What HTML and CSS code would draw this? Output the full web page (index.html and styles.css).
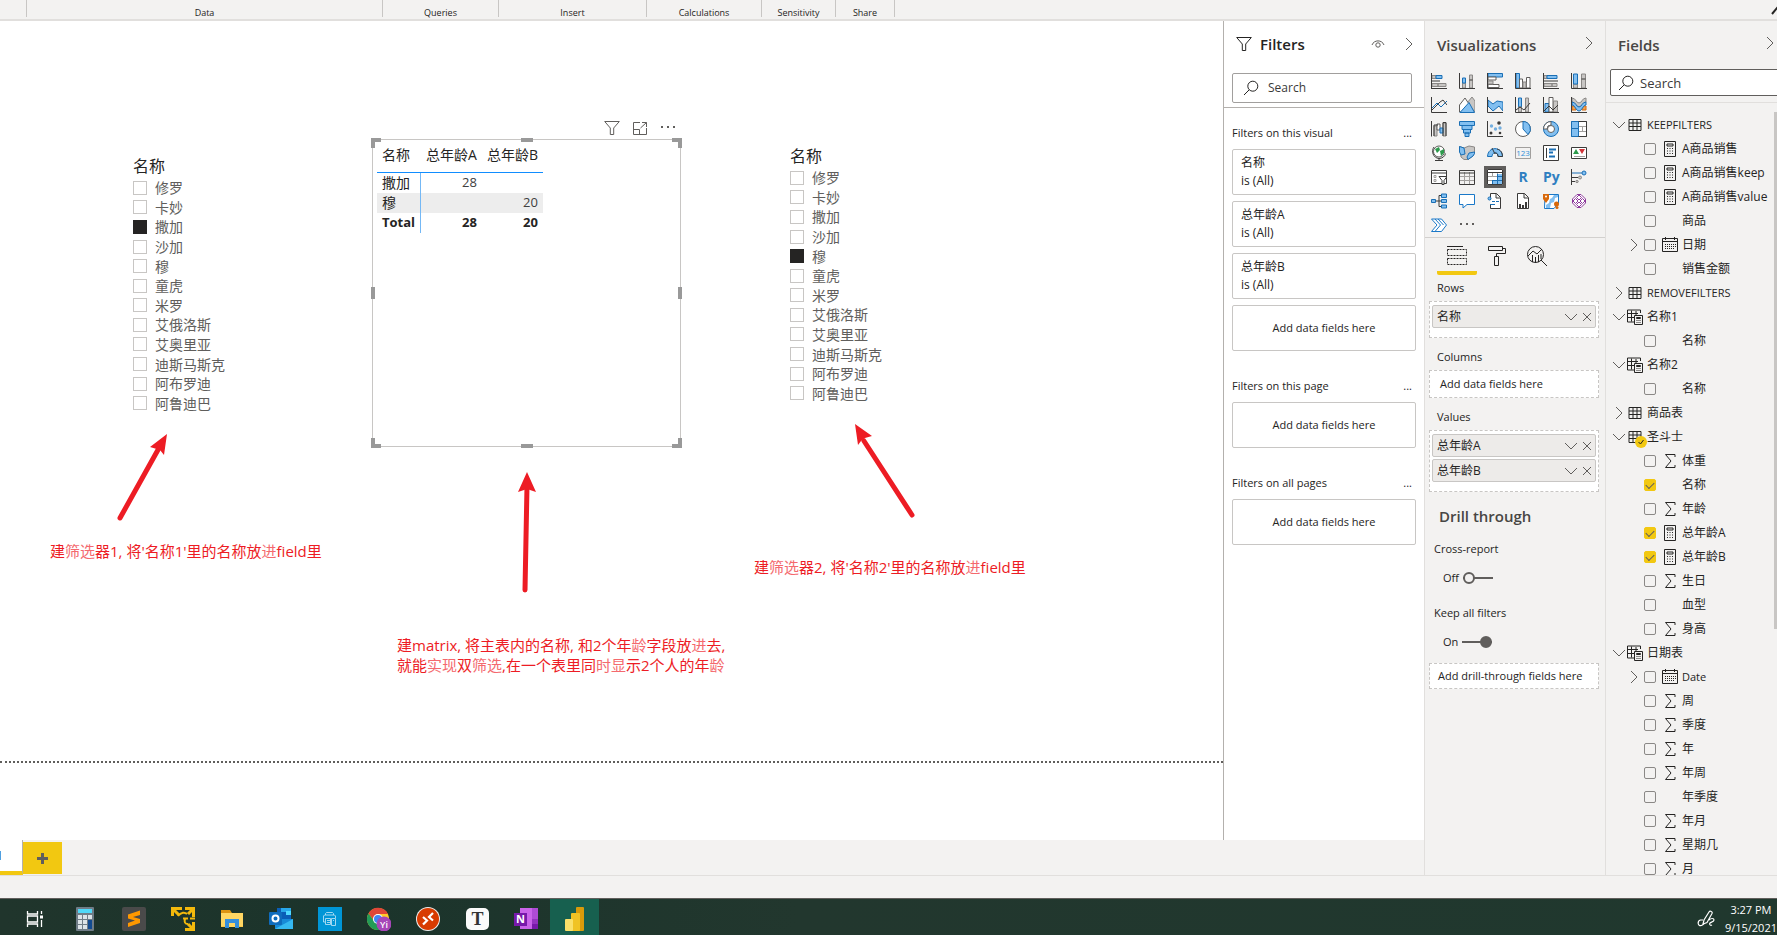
FILE: index.html
```html
<!DOCTYPE html>
<html lang="zh-CN">
<head>
<meta charset="utf-8">
<title>Report</title>
<link rel="stylesheet" href="styles.css">
</head>
<body>
<svg class="defs" aria-hidden="true">
  <symbol id="funnel" viewBox="0 0 16 16"><path d="M.7 1.5h14.6L9.7 8v6.5H6.3V8z"/></symbol>
  <symbol id="lens" viewBox="0 0 16 16"><circle cx="9.8" cy="6.2" r="5"/><path d="M6.2 9.8 1 15"/></symbol>
  <symbol id="right" viewBox="0 0 12 12"><path d="m3 0 6 6-6 6"/></symbol>
  <symbol id="down" viewBox="0 0 12 12"><path d="m0 3 6 6 6-6"/></symbol>
  <symbol id="cross" viewBox="0 0 12 12"><path d="m2 2 8 8M10 2l-8 8"/></symbol>
  <symbol id="table" viewBox="0 0 16 16"><path d="M2 2.5h12v11H2zM2 6h12M2 9.5h12M6 2.5v11M10 2.5v11"/></symbol>
  <symbol id="calctable" viewBox="0 0 16 16"><path d="M7 13H.5V1h13v3M.5 4.5H11M.5 8.500H7M4.500 1.500v11M9 2v4M7.500 6.500h8v9h-8zM9.500 8.500h4v1h-4zM9.500 11.500h1m1 0h1m1 0h.5M9.500 13.500h1m1 0h1m1 0h.5"/></symbol>
  <symbol id="calc" viewBox="0 0 16 16"><path d="M2.500.5h11v15h-11zM5 3h6v2H5z"/><path d="M5 7.500h7M5 10h7M5 12.500h7" stroke-dasharray="1 1.500"/></symbol>
  <symbol id="cal" viewBox="0 0 16 16"><path d="M.5 1.500h15v13H.5zM.5 4.500h15M3.500 0v3M12.500 0v3"/><path d="M3 7.500h11M3 9.500h11M3 11.500h9" stroke-dasharray="1 1"/></symbol>
  <symbol id="sum" viewBox="0 0 16 16"><path d="M13 4V1.500H3.500L9 8l-5.500 6.500H13V12"/></symbol>
</svg>

<header class="ribbon">
  <div class="group g0"></div>
  <div class="group g1">Data</div>
  <div class="group g2">Queries</div>
  <div class="group g3">Insert</div>
  <div class="group g4">Calculations</div>
  <div class="group g5">Sensitivity</div>
  <div class="group g6">Share</div>
  <button class="collapse" aria-label="Collapse ribbon"><svg viewBox="0 0 12 12"><path d="m1 9 5-6 5 6"/></svg></button>
</header>

<div class="workspace">
  <div class="report">
    <div class="stage">
      <main class="canvas">
        <fieldset class="slicer slicer-a">
          <legend>名称</legend>
          <div class="options">
            <label><input type="checkbox">修罗</label>
            <label><input type="checkbox">卡妙</label>
            <label><input type="checkbox" checked>撒加</label>
            <label><input type="checkbox">沙加</label>
            <label><input type="checkbox">穆</label>
            <label><input type="checkbox">童虎</label>
            <label><input type="checkbox">米罗</label>
            <label><input type="checkbox">艾俄洛斯</label>
            <label><input type="checkbox">艾奥里亚</label>
            <label><input type="checkbox">迪斯马斯克</label>
            <label><input type="checkbox">阿布罗迪</label>
            <label><input type="checkbox">阿鲁迪巴</label>
          </div>
        </fieldset>

        <section class="matrix" aria-label="Matrix">
          <div class="tools">
            <button aria-label="Filters"><svg class="line" viewBox="0 0 16 16"><use href="#funnel"/></svg></button>
            <button aria-label="Focus mode"><svg class="line" viewBox="0 0 16 16"><path d="M8 2.500H1.500v12h13V8M10 2.500h4.500V7M14.500 2.500 8.500 8M1.500 9.500h6v5"/></svg></button>
            <button aria-label="More options"><svg class="solid" viewBox="0 0 16 16"><path d="M1 6h2v2H1zM7 6h2v2H7zM13 6h2v2h-2z"/></svg></button>
          </div>
          <table>
            <thead><tr><th>名称</th><th>总年龄A</th><th>总年龄B</th></tr></thead>
            <tbody>
              <tr><th>撒加</th><td>28</td><td></td></tr>
              <tr class="alt"><th>穆</th><td></td><td>20</td></tr>
              <tr class="total"><th>Total</th><td>28</td><td>20</td></tr>
            </tbody>
          </table>
          <i class="corner tl"></i><i class="corner tr"></i><i class="corner bl"></i><i class="corner br"></i>
          <i class="edge top"></i><i class="edge bottom"></i><i class="edge left"></i><i class="edge right"></i>
        </section>

        <fieldset class="slicer slicer-b">
          <legend>名称</legend>
          <div class="options">
            <label><input type="checkbox">修罗</label>
            <label><input type="checkbox">卡妙</label>
            <label><input type="checkbox">撒加</label>
            <label><input type="checkbox">沙加</label>
            <label><input type="checkbox" checked>穆</label>
            <label><input type="checkbox">童虎</label>
            <label><input type="checkbox">米罗</label>
            <label><input type="checkbox">艾俄洛斯</label>
            <label><input type="checkbox">艾奥里亚</label>
            <label><input type="checkbox">迪斯马斯克</label>
            <label><input type="checkbox">阿布罗迪</label>
            <label><input type="checkbox">阿鲁迪巴</label>
          </div>
        </fieldset>

        <svg class="arrows" aria-hidden="true">
          <path class="shaft" d="M120 497 159 427M525 569 527 465M912 494 864 420"/>
          <path d="m167 413-3 21-4-5-10-3zM527 451l9 20-9-3-9 3zM855 403l17 12-7 2-4 3-3 4z"/>
        </svg>
        <p class="note note-a">建<span>筛选</span>器1, 将'名称1'里的名称放<span>进</span>field里</p>
        <p class="note note-b">建matrix, 将主表内的名称, 和2个年<span>龄</span>字段放<span>进</span>去,<br>就能<span>实现</span>双<span>筛选</span>,在一个表里同<span>时显</span>示2个人的年<span>龄</span></p>
        <p class="note note-c">建<span>筛选</span>器2, 将'名称2'里的名称放<span>进</span>field里</p>
        <div class="page-end"></div>
      </main>

      <aside class="filters">
        <div class="filters-head">
          <svg class="line dark f-icon" viewBox="0 0 16 16"><use href="#funnel"/></svg>
          <h2>Filters</h2>
          <button aria-label="Hide filters"><svg class="line" viewBox="0 0 14 14"><path d="M1 8C3 2.500 11 2.500 13 8"/><circle cx="7" cy="8" r="2.200"/></svg></button>
          <button aria-label="Collapse filters"><svg class="line" viewBox="0 0 12 12"><use href="#right"/></svg></button>
        </div>
        <label class="search"><svg class="line dark" viewBox="0 0 16 16"><use href="#lens"/></svg><input type="text" placeholder="Search" aria-label="Search filters"></label>
        <section>
          <h3>Filters on this visual <button aria-label="More">...</button></h3>
          <div class="card">名称<br>is (All)</div>
          <div class="card">总年龄A<br>is (All)</div>
          <div class="card">总年龄B<br>is (All)</div>
          <div class="card drop">Add data fields here</div>
        </section>
        <section>
          <h3>Filters on this page <button aria-label="More">...</button></h3>
          <div class="card drop">Add data fields here</div>
        </section>
        <section>
          <h3>Filters on all pages <button aria-label="More">...</button></h3>
          <div class="card drop">Add data fields here</div>
        </section>
      </aside>
    </div>
    <nav class="pages">
      <button class="page" aria-label="Page 1"><i></i></button>
      <button class="add" aria-label="New page"><svg viewBox="0 0 11 11"><path d="M4 0h3v4h4v3H7v4H4V7H0V4h4z"/></svg></button>
    </nav>
  </div>

  <aside class="viz">
    <div class="pane-head"><h2>Visualizations</h2><button aria-label="Collapse visualizations"><svg class="line" viewBox="0 0 12 12"><use href="#right"/></svg></button></div>
    <div class="gallery">
      <button aria-label="Stacked bar"><svg viewBox="0 0 16 16"><path class="g" d="M1 2.500h4v3H1zM1 10.500h6v3H1zM7 10.500h8v3H7z"/><path class="b" d="M5 2.500h6v3H5z"/><path class="k" d="M.5 0v16M0 8h9M0 15.500h16"/></svg></button>
      <button aria-label="Stacked column"><svg viewBox="0 0 16 16"><path class="g" d="M3.500 10h3v5h-3zM10.500 2h3v13h-3z"/><path class="b" d="M3.500 5h3v5h-3z"/><path class="k" d="M.5 0v15.500H16M10.500 7h3"/></svg></button>
      <button aria-label="Clustered bar"><svg viewBox="0 0 16 16"><path class="b" d="M1 .5h14.500v3.500H1z"/><path class="w" d="M1 4h8v3H1zM1 11.500h11v3H1z"/><path class="g" d="M1 8h5v3H1z"/><path class="k" d="M.5 0v15.500H16"/></svg></button>
      <button aria-label="Clustered column"><svg viewBox="0 0 16 16"><path class="b" d="M1 .5h3.500V15H1z"/><path class="w" d="M4.500 6h3v9h-3zM11.500 4.500h3.500V15h-3.500z"/><path class="g" d="M8 9h3v6H8z"/><path class="k" d="M.5 0v15.500H16"/></svg></button>
      <button aria-label="100% bar"><svg viewBox="0 0 16 16"><path class="g" d="M1 2.500h3v3H1zM1 10.500h8v3H1zM9 10.500h5v3H9z"/><path class="b" d="M4 2.500h10v3H4z"/><path class="k" d="M.5 0v16M0 8h15M0 15.500h16"/></svg></button>
      <button aria-label="100% column"><svg viewBox="0 0 16 16"><path class="g" d="M2.500 11h4v4h-4zM10.500 1h4v14h-4z"/><path class="b" d="M2.500 1h4v10h-4z"/><path class="k" d="M.5 0v15.500H16M10.500 6h4"/></svg></button>

      <button aria-label="Line"><svg viewBox="0 0 16 16"><path class="bl" d="m1 11 5-5 4 4 6-6"/><path class="k" d="M.5 0v15.500H16M1 13l8-8 3-2 4 5"/></svg></button>
      <button aria-label="Area"><svg viewBox="0 0 16 16"><path class="g" d="m8 6 5-6 3 4v11z"/><path class="w" d="M.5 8 6 1l4 6-6 8H.5z"/><path class="b" d="m1 15.500 9-10 5.500 10z"/></svg></button>
      <button aria-label="Stacked area"><svg viewBox="0 0 16 16"><path class="b" d="m1 3 5 4 4-3 6 1v9l-4-5-6 5-5-5z"/><path class="k" d="M.5 0v15.500H16"/></svg></button>
      <button aria-label="Line and stacked column"><svg viewBox="0 0 16 16"><path class="b" d="M3.500 1h3v9h-3z"/><path class="g" d="M10.500 1h3v14h-3zM3.500 10h3v5h-3z"/><path class="k" d="M.5 0v15.500H16M1 13l4-3 4 3 6-7"/></svg></button>
      <button aria-label="Line and clustered column"><svg viewBox="0 0 16 16"><path class="b" d="M2 6.500h4V15H2z"/><path class="w" d="M6 .5h4V15H6z"/><path class="g" d="M10.500 4h4v11h-4z"/><path class="k" d="M.5 0v15.500H16M1 14l5-5 4 4 5-5"/></svg></button>
      <button aria-label="Ribbon"><svg viewBox="0 0 16 16"><path class="o" d="M1 9h4v4H1zM11 9h4v4h-4z"/><path class="g" d="M1 1c4 0 4 5 7 5s3-5 7-5v4c-4 0-4 5-7 5S5 5 1 5z"/><path class="b" d="M1 5c4 0 4 5 7 5s3-5 7-5v3c-3 0-4 6-7 6S4 8 1 8z"/><path class="k" d="M.5 0v15.500H16"/></svg></button>

      <button aria-label="Waterfall"><svg viewBox="0 0 16 16"><path class="g" d="M3 5h3v10H3zM12 2h3v13h-3z"/><path class="w" d="M6 3h3v6H6z"/><path class="b" d="M9 7h3v5H9z"/><path class="k" d="M.5 0v15.500M3 15V4h4M12 15V1.500h3V15"/></svg></button>
      <button aria-label="Funnel"><svg viewBox="0 0 16 16"><path class="b" d="M.5.5h15v4H.5zM3 4.500h10v4H3zM4.500 8.500h7v3.500h-7zM6 12h4v3.500H6z"/></svg></button>
      <button aria-label="Scatter"><svg viewBox="0 0 16 16"><path class="k" d="M.5 0v15.500H16"/><g fill="#3b3a39"><circle cx="12" cy="2" r="1.800"/><circle cx="4" cy="12" r="1.500"/><circle cx="13" cy="12" r="1.300"/></g><g fill="#74afe0"><circle cx="4.500" cy="5" r="1.700"/><circle cx="8.500" cy="8" r="1.700"/><circle cx="13" cy="7" r="1.700"/></g></svg></button>
      <button aria-label="Pie"><svg viewBox="0 0 16 16"><circle class="w" cx="8" cy="8" r="7.500"/><path class="b" d="M8 .5A7.500 7.500 0 0 1 13 13.500L8 8z"/></svg></button>
      <button aria-label="Donut"><svg viewBox="0 0 16 16"><circle class="b" cx="8" cy="8" r="7.500"/><path class="w" d="M.5 8A7.500 7.500 0 0 1 8 .5V4a4 4 0 0 0-4 4z"/><circle class="w" cx="8" cy="8" r="3.500"/></svg></button>
      <button aria-label="Treemap"><svg viewBox="0 0 16 16"><path class="w" d="M.5.5h15v15H.5z"/><path class="b" d="M.5.5h7v7h-7zM.5 7.500h7v8h-7z"/><path class="gl" d="M8 5.500h7M8 10.500h7M11.500 5v6"/><path class="k" d="M7.500.5h8v15h-8"/></svg></button>

      <button aria-label="Map"><svg viewBox="0 0 16 16"><circle class="w" cx="8" cy="6.500" r="5.500"/><path fill="#2c9a4b" d="M4 4l4-2 1 3-3 3zM9 6l4-2v4l-3 3z"/><path class="k" d="M3 2C0 6 2 13 8 13.500c3 0 6-2 6.500-5M8 13.500v2M4 15.500h8"/></svg></button>
      <button aria-label="Filled map"><svg viewBox="0 0 16 16"><path class="g" d="M.5 1.500 5 3l5-2 5.500 1v6L14 11l-5 3.500H5L2 12z"/><path class="b" d="M.5 1.500 5 3l1 6-4 1-1.500-3zM10 8l5.500-1v1.500L14 11l-5 3.500L8 12z"/></svg></button>
      <button aria-label="Gauge"><svg viewBox="0 0 16 16"><path class="b" d="M.5 11.500C1 1 15 1 15.500 11.500H11c0-5-6-5-6 0z"/><path class="k" d="M10 4c4 1 5.500 4 5.500 7.500H11C11 9 10 8 8 8M5 3l3 6"/></svg></button>
      <button aria-label="Card"><svg viewBox="0 0 16 16"><path class="gl" d="M.5 2.500h15v11H.5z"/><text x="8" y="11" text-anchor="middle" class="num">123</text></svg></button>
      <button aria-label="Multi-row card"><svg viewBox="0 0 16 16"><path class="kw" d="M.5.5h15v15H.5z"/><path class="bl" d="M6 4.500h7M6 7.500h4M6 11.500h6" stroke-width="2"/><path class="k" d="M3.500 3v10"/></svg></button>
      <button aria-label="KPI"><svg viewBox="0 0 16 16"><path class="kw" d="M.5 2.500h15v11H.5z"/><path fill="#2c9a4b" d="m5 4 3 5H2z"/><path fill="#d13438" d="M8 4h6l-3 5z"/><path class="gl" d="M3 11.500h11"/></svg></button>

      <button aria-label="Slicer"><svg viewBox="0 0 16 16"><path class="kw" d="M.5 1.500h15v13H.5zM0 4h16"/><path class="gl" d="M3 6.500h2v2H3zM3 10.500h2v2H3z"/><path class="kw" d="M8 7.500h8l-3 4v4h-2v-4z"/></svg></button>
      <button aria-label="Table"><svg viewBox="0 0 16 16"><path class="gl" d="M5.500 3v12M10.500 3v12M0 7.500h16M0 11.500h16"/><path class="k" d="M.5 1.500h15v14H.5zM0 4h16"/></svg></button>
      <button class="selected" aria-label="Matrix"><svg viewBox="0 0 16 16"><path fill="#fff" d="M1 1h14v14H1z"/><path fill="#82bff0" d="M10 5h5v10H5v-4h5z"/><path class="gl" d="M5.500 4v3.500H1M10.500 4v3.500h-5M1 11.500h4"/><path class="bl" d="M10.500 5v10.500M5.500 11.500h10M5.500 11v4M10.500 7.500h5"/><path class="k" d="M.5.5h15v15H.5zM0 3.500h16"/></svg></button>
      <button aria-label="R script" class="script">R</button>
      <button aria-label="Python script" class="script">Py</button>
      <button aria-label="Key influencers"><svg viewBox="0 0 16 16"><path class="bl" d="M1 4h10"/><circle class="b" cx="13" cy="4" r="2"/><path class="k" d="M.5 0v16M1 8.500h6M1 12.500h3"/><circle class="g" cx="9" cy="8.500" r="1.500"/><circle class="g" cx="6" cy="12.500" r="1.200"/></svg></button>

      <button aria-label="Decomposition tree"><svg viewBox="0 0 16 16"><path class="k" d="M5 8h5M8 2.500v11M8 2.500h2M8 13.500h2"/><path class="b" d="M.5 6.500h4v3h-4zM10.500 1h5v3.500h-5zM10.500 6.500h5v3h-5zM10.500 12h5v3h-5z"/></svg></button>
      <button aria-label="Q&amp;A"><svg viewBox="0 0 16 16"><path class="bw" d="M.5 1.500h15v10H8l-4 3.500v-3.500H.5z"/></svg></button>
      <button aria-label="Smart narrative"><svg viewBox="0 0 16 16"><path class="kw" d="M3.500 7V.5h6l4 4v11h-10V12M9 .5V5h4"/><circle class="b" cx="2.500" cy="5.500" r="1.500"/><path class="bl" d="M5 8.500h3M9 8.500h3M3 11.500h5"/></svg></button>
      <button aria-label="Paginated report"><svg viewBox="0 0 16 16"><path class="kw" d="M2.500.5h7l4 4v11h-11zM9 .5V5h4"/><path fill="#3b3a39" d="M4 11h2v4H4zM7 12h2v3H7zM10 9h2v6h-2z"/></svg></button>
      <button aria-label="ArcGIS maps"><svg viewBox="0 0 16 16"><path class="bw" d="M2 1.500h13.500V10L11 15.500H1.500z"/><path fill="#82bff0" d="M7 6l2-1 2-3h4v2l-3 1-1 4-3 1-1 5H3v-3l3-2z"/><path fill="#d8690b" d="M0 1h6v5L3 10 0 6z"/><circle cx="3" cy="3.500" r="1" fill="#fff"/><circle cx="13.500" cy="11" r="2.500" fill="#d8690b"/><circle cx="14" cy="14.500" r="1.500" fill="#d8690b"/></svg></button>
      <button aria-label="Power Apps"><svg viewBox="0 0 16 16"><path class="p" d="M6 1.500h4L14.500 6v4L10 14.500H6L1.500 10V6z"/><path class="p" d="m8 2 2.500 2.500L8 7 5.500 4.500zM8 9l2.500 2.500L8 14l-2.500-2.500zM4.500 5.500 7 8l-2.500 2.500L2 8zM11.500 5.500 14 8l-2.500 2.500L9 8z"/></svg></button>

      <button aria-label="Power Automate"><svg viewBox="0 0 16 16"><path class="bw" d="M.5 2h10l5 6-5 6.500H.5L6 8zM4 2l5.500 6L4 14.500M7 2l5.500 6"/></svg></button>
      <button aria-label="More visuals"><svg viewBox="0 0 16 16"><path fill="#605e5c" d="M1 6h2v2H1zM7 6h2v2H7zM13 6h2v2h-2z"/></svg></button>
    </div>

    <div class="modes">
      <button class="active" aria-label="Fields"><svg viewBox="0 0 20 20"><path d="M0 .5h16"/><path d="M.5 3.500h19v6H.5zM.5 12.500h19v6H.5z" stroke-dasharray="2 1"/></svg></button>
      <button aria-label="Format"><svg viewBox="0 0 20 20"><path d="M1.500.5h14v4h-14zM15.500 2.500h3v5h-9v3M7.500 10.500h4v9h-4z"/></svg></button>
      <button aria-label="Analytics"><svg viewBox="0 0 20 20"><circle cx="8.500" cy="8.500" r="8"/><path d="m14 14 6 6M1 10l5-5 4 3 5-5M5.500 9v7M8.500 11v6M11.500 9v7M14 8v5"/></svg></button>
    </div>

    <div class="wells">
      <h3>Rows</h3>
      <div class="well"><div class="chip">名称<svg class="line"><use href="#down"/></svg><svg class="line"><use href="#cross"/></svg></div></div>
      <h3>Columns</h3>
      <div class="well hint">Add data fields here</div>
      <h3>Values</h3>
      <div class="well">
        <div class="chip">总年龄A<svg class="line"><use href="#down"/></svg><svg class="line"><use href="#cross"/></svg></div>
        <div class="chip">总年龄B<svg class="line"><use href="#down"/></svg><svg class="line"><use href="#cross"/></svg></div>
      </div>
      <h2>Drill through</h2>
      <h4>Cross-report</h4>
      <label class="toggle">Off<input type="checkbox" aria-label="Cross-report"></label>
      <h4>Keep all filters</h4>
      <label class="toggle">On<input type="checkbox" aria-label="Keep all filters" checked></label>
      <div class="well drill">Add drill-through fields here</div>
    </div>
  </aside>

  <aside class="fields">
    <div class="pane-head"><h2>Fields</h2><button aria-label="Collapse fields"><svg class="line" viewBox="0 0 12 12"><use href="#right"/></svg></button></div>
    <label class="search"><svg class="line dark" viewBox="0 0 16 16"><use href="#lens"/></svg><input type="text" placeholder="Search" aria-label="Search fields"></label>
    <div class="tree">
      <div class="node latin"><svg><use href="#down"/></svg><svg class="ico"><use href="#table"/></svg>KEEPFILTERS</div>
      <label class="leaf"><b></b><input type="checkbox"><svg class="ico"><use href="#calc"/></svg>A商品销售</label>
      <label class="leaf"><b></b><input type="checkbox"><svg class="ico"><use href="#calc"/></svg>A商品销售keep</label>
      <label class="leaf"><b></b><input type="checkbox"><svg class="ico"><use href="#calc"/></svg>A商品销售value</label>
      <label class="leaf"><b></b><input type="checkbox"><svg class="ico"></svg>商品</label>
      <label class="leaf"><b><svg><use href="#right"/></svg></b><input type="checkbox"><svg class="ico"><use href="#cal"/></svg>日期</label>
      <label class="leaf"><b></b><input type="checkbox"><svg class="ico"></svg>销售金额</label>
      <div class="node latin"><svg><use href="#right"/></svg><svg class="ico"><use href="#table"/></svg>REMOVEFILTERS</div>
      <div class="node"><svg><use href="#down"/></svg><svg class="ico"><use href="#calctable"/></svg>名称1</div>
      <label class="leaf"><b></b><input type="checkbox"><svg class="ico"></svg>名称</label>
      <div class="node"><svg><use href="#down"/></svg><svg class="ico"><use href="#calctable"/></svg>名称2</div>
      <label class="leaf"><b></b><input type="checkbox"><svg class="ico"></svg>名称</label>
      <div class="node"><svg><use href="#right"/></svg><svg class="ico"><use href="#table"/></svg>商品表</div>
      <div class="node"><svg><use href="#down"/></svg><svg class="ico used"><use href="#table"/><circle cx="14" cy="13" r="6"/><path d="m11.500 13 2 2 3-4"/></svg>圣斗士</div>
      <label class="leaf"><b></b><input type="checkbox"><svg class="ico"><use href="#sum"/></svg>体重</label>
      <label class="leaf"><b></b><input type="checkbox" checked><svg class="ico"></svg>名称</label>
      <label class="leaf"><b></b><input type="checkbox"><svg class="ico"><use href="#sum"/></svg>年龄</label>
      <label class="leaf"><b></b><input type="checkbox" checked><svg class="ico"><use href="#calc"/></svg>总年龄A</label>
      <label class="leaf"><b></b><input type="checkbox" checked><svg class="ico"><use href="#calc"/></svg>总年龄B</label>
      <label class="leaf"><b></b><input type="checkbox"><svg class="ico"><use href="#sum"/></svg>生日</label>
      <label class="leaf"><b></b><input type="checkbox"><svg class="ico"></svg>血型</label>
      <label class="leaf"><b></b><input type="checkbox"><svg class="ico"><use href="#sum"/></svg>身高</label>
      <div class="node"><svg><use href="#down"/></svg><svg class="ico"><use href="#calctable"/></svg>日期表</div>
      <label class="leaf latin"><b><svg><use href="#right"/></svg></b><input type="checkbox"><svg class="ico"><use href="#cal"/></svg>Date</label>
      <label class="leaf"><b></b><input type="checkbox"><svg class="ico"><use href="#sum"/></svg>周</label>
      <label class="leaf"><b></b><input type="checkbox"><svg class="ico"><use href="#sum"/></svg>季度</label>
      <label class="leaf"><b></b><input type="checkbox"><svg class="ico"><use href="#sum"/></svg>年</label>
      <label class="leaf"><b></b><input type="checkbox"><svg class="ico"><use href="#sum"/></svg>年周</label>
      <label class="leaf"><b></b><input type="checkbox"><svg class="ico"></svg>年季度</label>
      <label class="leaf"><b></b><input type="checkbox"><svg class="ico"><use href="#sum"/></svg>年月</label>
      <label class="leaf"><b></b><input type="checkbox"><svg class="ico"><use href="#sum"/></svg>星期几</label>
      <label class="leaf"><b></b><input type="checkbox"><svg class="ico"><use href="#sum"/></svg>月</label>
      <div class="thumb"></div>
    </div>
  </aside>
</div>

<div class="status"></div>

<footer class="taskbar">
  <button class="task-view" aria-label="Task view"><svg viewBox="0 0 24 24" fill="none" stroke="#fff" stroke-width="1.300"><path d="M4.500 4v3h10V4M4.500 20v-3h10v3M4.500 9h10v6h-10zM18.500 4v3M18.500 13v7"/><path d="M17 8.500h3v3h-3z" fill="#fff" stroke="none"/></svg></button>
  <button aria-label="Calculator"><svg viewBox="0 0 24 24"><rect x="3" width="18" height="24" rx="1" fill="#6f7c87"/><path fill="#50d8f8" d="M5 2h14v4H5z"/><path fill="#dce3e8" d="M5 8h4v4H5zM10 8h4v4h-4zM15 8h4v4h-4zM5 13h4v4H5zM10 13h4v4h-4zM5 18h4v4H5zM10 18h4v4h-4z"/><path fill="#124b91" d="M15 13h4v9h-4z"/></svg></button>
  <button aria-label="Sublime Text"><svg viewBox="0 0 24 24"><rect width="24" height="24" rx="2" fill="#4a4a4a"/><path fill="#ff9800" d="m6 7.500 12-4v4.500l-7 2 7 2v4l-12 4v-4l7-2.500-7-2z"/></svg></button>
  <button aria-label="Arrows"><svg viewBox="0 0 24 24" fill="none" stroke="#f3b90c" stroke-width="3"><path d="M1.500 9V1.500H11M2 2l6 6M14 1.500h8.500V10M22 2l-5 5M14 22.500h8.500V15M22 22l-5-5"/><path d="M7 9c3-4 7-4 9-2M12 11.500h5M14 12c-1 3 0 5 3 5M19 11.500h5" stroke-width="2"/></svg></button>
  <button aria-label="File Explorer"><svg viewBox="0 0 24 24"><path fill="#dd9413" d="M1 3h9l2 3v4H1z"/><path fill="#ffd663" d="M1 6h22v14H1z"/><path fill="#368fdc" d="M5 12h14v9h-4v-5H9v5H5z"/><path fill="#fbc848" d="M1 19h4v1H1zM19 19h4v1h-4z"/></svg></button>
  <button aria-label="Outlook"><svg viewBox="0 0 24 24"><path fill="#0a5eb7" d="M8 1h14v12H8z"/><path fill="#28a8ea" d="M12 1h10v4H12z"/><path fill="#50d9ff" d="M17 4h5v4h-5z"/><path fill="#178ad8" d="M6 12h18v10H6z"/><path fill="#35b8f1" d="m6 22 18-10v10z"/><rect y="5" width="13" height="13" rx="1" fill="#0f6cbd"/><circle cx="6.500" cy="11.500" r="3" fill="none" stroke="#fff" stroke-width="2"/></svg></button>
  <button aria-label="Device"><svg viewBox="0 0 24 24"><path fill="#0096d6" d="M0 0h24v24H0z"/><path fill="none" stroke="#c8e8f8" stroke-width=".8" d="M7.500 8V6.500l1-1h6l1 1V8M7 15H5.500V9l1-1h10l1 1v2M7.500 11.500h5v6h-5zM9 13.500h3M9 15.500h3M13.500 11.500h4v7h-4zM15 13.500h1"/></svg></button>
  <button aria-label="Chrome"><svg viewBox="0 0 24 24"><circle cx="11" cy="12" r="11" fill="#ffc928"/><path fill="#e04638" d="M1.500 6.500A11 11 0 0 1 21 7H11a5 5 0 0 0-4 7z"/><path fill="#239b57" d="M1.500 6.500A11 11 0 0 0 12 23l4-8a6 6 0 0 1-9-1z"/><circle cx="11" cy="12" r="5" fill="#fff"/><circle cx="11" cy="12" r="4" fill="#4285f4"/><circle cx="17" cy="17" r="7.500" fill="#a647b8"/><text x="17" y="20.500" text-anchor="middle" class="yi">Yi</text></svg></button>
  <button aria-label="Remote Desktop"><svg viewBox="0 0 24 24"><circle cx="12" cy="12" r="12" fill="#eee"/><circle cx="12" cy="12" r="11" fill="#d83b01"/><path fill="none" stroke="#fff" stroke-width="2.200" d="m7 10 4 3.500-4 4M17 6l-4 4 4 3.500"/></svg></button>
  <button aria-label="Typora"><svg viewBox="0 0 24 24"><rect x="1" y="1" width="23" height="22" rx="5" fill="#fafafa"/><text x="12.500" y="18" text-anchor="middle" class="tee">T</text></svg></button>
  <button aria-label="OneNote"><svg viewBox="0 0 24 24"><path fill="#ca64ea" d="M6 1h18v21H6z"/><path fill="#ae4bd5" d="M18 1h6v11h-6z"/><path fill="#9332bf" d="M18 12h6v5h-6z"/><path fill="#7719aa" d="M18 17h6v5h-6z"/><path fill="#7719aa" d="M0 6h13v13H0z"/><text x="6.500" y="16" text-anchor="middle" class="enn">N</text></svg></button>
  <button class="running" aria-label="Power BI"><svg viewBox="0 0 24 24"><rect x="13" width="8" height="24" rx="1" fill="#d89b0b"/><rect x="8" y="6" width="9" height="18" rx="1" fill="#f0c324"/><rect x="2" y="12" width="8" height="12" rx="1" fill="#fae069"/></svg></button>
  <div class="tray">
    <svg viewBox="0 0 18 18" fill="none" stroke="#fff" stroke-width="1.200"><path d="M6 10H3.500c-3.500 1-3 6.500 1 5.500L7 14M6 14l1-4 5-8c1-1.500 4-.5 3 1.500l-5 9zM12 10c2-2 5-2 5 0s-3 2-4 3 0 3 2 2"/></svg>
    <div class="clock">3:27 PM<br>9/15/2021</div>
  </div>
</footer>
</body>
</html>
```
FILE: styles.css
```css
* { box-sizing: border-box; }

body {
  margin: 0;
  height: 100vh;
  display: flex;
  flex-direction: column;
  overflow: hidden;
  background: #f3f2f1;
  color: #252423;
  font-family: "Open Sans", "Noto Sans CJK SC", sans-serif;
  font-size: 11px;
  line-height: 16px;
}

h2, h3, h4, p { margin: 0; font-size: 11px; font-weight: 400; }
button { padding: 0; border: 0; background: none; color: inherit; font: inherit; }
svg { display: block; flex: none; }
.defs { position: absolute; width: 0; height: 0; }
.line { fill: none; stroke: #605e5c; }
.dark { stroke: #252423; }
.solid { fill: #605e5c; }

/* Ribbon */
.ribbon {
  flex: none;
  display: flex;
  height: 21px;
  border-bottom: 2px solid #e1dfdd;
  font-size: 9px;
}
.group { height: 17px; padding-top: 5px; border-right: 1px solid #c8c6c4; text-align: center; }
.g0 { width: 27px; }
.g1 { width: 356px; }
.g2 { width: 116px; }
.g3 { width: 148px; }
.g4 { width: 115px; }
.g5 { width: 74px; }
.g6 { width: 59px; }
.collapse { margin: 3px -6px 0 auto; }
.collapse svg { width: 12px; height: 12px; fill: none; stroke: #252423; stroke-width: 2; }

/* Workspace */
.workspace { flex: 1; min-height: 0; display: flex; border-bottom: 1px solid #e1dfdd; }
.report { flex: 1; min-width: 0; display: flex; flex-direction: column; }
.stage { flex: 1; min-height: 0; display: flex; background: #fff; }
.canvas { flex: 1; min-width: 0; position: relative; overflow: hidden; }

.slicer { position: absolute; margin: 0; padding: 0; border: 0; }
.slicer-a { left: 133px; top: 133px; }
.slicer-b { left: 790px; top: 123px; }
.slicer legend { padding: 0; font-size: 16px; line-height: 24px; }
.options { display: grid; grid-template-rows: repeat(12, 1fr); height: 235px; }
.options label { display: flex; align-items: center; gap: 8px; color: #605e5c; font-size: 14px; line-height: 19px; }
.options input { appearance: none; width: 14px; height: 14px; margin: 0; border: 1px solid #c8c6c4; }
.options input:checked { border-color: #252423; background: #252423; }

.matrix { position: absolute; left: 372px; top: 118px; width: 309px; height: 308px; padding: 5px 4px; border: 1px solid #c8c6c4; }
.tools { position: absolute; right: 4px; top: -20px; display: flex; gap: 12px; }
.tools svg { width: 16px; height: 16px; }
.matrix table { border-collapse: separate; border-spacing: 0; font-size: 14px; line-height: 19px; }
.matrix th, .matrix td { height: 20px; padding: 0 5px 1px; font-weight: 400; text-align: right; }
.matrix thead th { height: 28px; padding-bottom: 8px; border-bottom: 1px solid #118dff; white-space: nowrap; }
.matrix th:first-child { text-align: left; }
.matrix tbody th { border-right: 1px solid #74b8f5; }
.matrix td { color: #404040; font-size: 13px; }
.alt th, .alt td { background: #ededed; }
.matrix .total th, .matrix .total td { color: #252423; font-size: 13px; font-weight: 700; }
.corner { position: absolute; width: 10px; height: 10px; border: 0 solid #999; }
.tl { left: -2px; top: -2px; border-width: 4px 0 0 4px; }
.tr { right: -2px; top: -2px; border-width: 4px 4px 0 0; }
.bl { left: -2px; bottom: -2px; border-width: 0 0 4px 4px; }
.br { right: -2px; bottom: -2px; border-width: 0 4px 4px 0; }
.corner.bl { fill: none; }
.edge { position: absolute; background: #999; }
.top, .bottom { left: calc(50% - 6px); width: 12px; height: 4px; }
.left, .right { top: calc(50% - 6px); width: 4px; height: 12px; }
.top { top: -2px; }
.bottom { bottom: -2px; }
.left { left: -2px; }
.right { right: -2px; }

.arrows { position: absolute; inset: 0; width: 100%; height: 100%; fill: #ed1c24; pointer-events: none; }
.shaft { stroke: #ed1c24; stroke-width: 5; stroke-linecap: round; }
.note { position: absolute; color: #ed1c24; font-size: 15px; line-height: 20px; white-space: nowrap; }
.note span { color: #f4696e; }
.note-a { left: 50px; top: 520px; }
.note-b { left: 397px; top: 614px; }
.note-c { left: 754px; top: 536px; }
.page-end { position: absolute; left: 0; right: 0; top: 740px; border-top: 2px dotted #605e5c; }

/* Filters pane */
.filters { flex: none; width: 201px; border-left: 1px solid #b3b0ad; }
.filters-head { display: flex; align-items: center; height: 45px; padding: 0 9px 0 12px; }
.f-icon { width: 16px; height: 16px; }
.filters-head h2 { flex: 1; margin-left: 8px; font-size: 15px; font-weight: 600; }
.filters-head button { margin-left: 18px; }
.filters-head button svg { width: 14px; height: 14px; }
.filters-head button:last-child svg { width: 12px; height: 12px; }
.search { display: flex; align-items: center; gap: 9px; border: 1px solid #a19f9d; border-radius: 2px; background: #fff; }
.search svg { width: 16px; height: 16px; }
.search input { min-width: 0; padding: 0; border: 0; outline: 0; background: none; font: inherit; font-size: 12px; }
.search input::placeholder { color: #3b3a39; opacity: 1; }
.filters .search { height: 30px; margin: 7px 12px 4px 8px; padding: 0 10px; }
.filters section { padding: 0 8px 26px; }
.filters .search + section { padding-top: 16px; border-top: 1px solid #b3b0ad; }
.filters h3 { display: flex; justify-content: space-between; align-items: flex-start; height: 25px; padding: 1px 4px 0 0; }
.card { height: 46px; margin-bottom: 6px; padding: 4px 8px; border: 1px solid #c8c6c4; border-radius: 2px; font-size: 12px; line-height: 18px; }
.card:last-child { margin-bottom: 0; }
.card.drop { display: flex; align-items: center; justify-content: center; font-size: 11px; }

/* Page tabs */
.pages { flex: none; display: flex; height: 35px; }
.page { width: 23px; border-right: 1px solid #b3b0ad; border-bottom: 4px solid #f2c811; background: #fff; }
.page i { display: block; width: 1px; height: 9px; background: #4f9fe0; }
.add { display: flex; align-items: center; justify-content: center; width: 39px; margin: 2px 0 1px; background: #f2c811; }
.add svg { width: 11px; height: 11px; fill: #605e5c; }

/* Side panes */
.viz { flex: none; width: 181px; border-left: 1px solid #e1dfdd; }
.fields { flex: none; width: 172px; border-left: 1px solid #e1dfdd; overflow: hidden; }
.pane-head { display: flex; align-items: center; justify-content: space-between; height: 48px; padding: 0 10px 0 12px; }
.pane-head h2, .wells h2 { color: #484644; font-size: 15px; font-weight: 600; }
.pane-head button { margin-bottom: 4px; }
.pane-head svg { width: 12px; height: 12px; }
.fields .pane-head { padding-right: 1px; }

.gallery { display: grid; grid-template-columns: repeat(6, 16px); grid-auto-rows: 16px; gap: 8px 12px; padding: 4px 6px; }
.gallery svg { width: 16px; height: 16px; }
.gallery .selected { outline: 3px solid #605e5c; }
.gallery .script { color: #2f7fc1; font-size: 14px; font-weight: 700; line-height: 16px; }
.k { fill: none; stroke: #3b3a39; }
.kw { fill: #fff; stroke: #3b3a39; }
.w { fill: #fff; stroke: #605e5c; }
.b { fill: #82bff0; stroke: #1a6fb5; }
.bl { fill: none; stroke: #1a6fb5; }
.bw { fill: #fff; stroke: #1a78c8; }
.g { fill: #c8c6c4; stroke: #8a8886; }
.gl { fill: none; stroke: #a19f9d; }
.o { fill: #f0a050; stroke: #d8690b; }
.p { fill: #fff; stroke: #8e3a9c; }
.num { fill: #2f8fd8; font-size: 8px; }

.modes { display: flex; height: 40px; padding: 8px 12px 0; border-top: 1px solid #d2d0ce; }
.modes button { display: flex; align-items: flex-start; width: 40px; padding-left: 10px; }
.modes .active { height: 29px; border-bottom: 4px solid #f2c811; border-radius: 2px; }
.modes svg { width: 20px; height: 20px; fill: none; stroke: #252423; }

.wells { padding: 0 6px 0 4px; }
.wells h3 { height: 24px; padding: 3px 8px 0; }
.well { margin-bottom: 8px; padding: 3px 2px 9px; border: 1px dashed #c8c6c4; background: #fff; }
.chip { display: flex; align-items: center; gap: 4px; height: 23px; margin-bottom: 2px; padding: 0 2px 0 4px; border: 1px solid #c8c6c4; border-radius: 2px; background: #edebe9; font-size: 12px; }
.chip:last-child { margin-bottom: 0; }
.chip svg { width: 12px; height: 12px; }
.chip svg:first-of-type { margin-left: auto; }
.hint { padding: 5px 10px; }
.wells h2 { padding: 8px 10px; line-height: 16px; }
.wells h4 { height: 16px; margin: 9px 0 13px 5px; }
.toggle { display: flex; align-items: center; gap: 4px; height: 16px; margin: 0 0 19px 14px; }
.toggle input { appearance: none; position: relative; width: 30px; height: 12px; margin: 0; background: linear-gradient(#605e5c, #605e5c) center / 100% 2px no-repeat; }
.toggle input::before { content: ""; box-sizing: border-box; position: absolute; left: 0; top: 0; width: 12px; height: 12px; border: 2px solid #605e5c; border-radius: 50%; background: #f3f2f1; }
.toggle input:checked::before { left: auto; right: 0; background: #605e5c; }
.drill { margin-top: -6px; padding: 4px 8px; white-space: nowrap; }

.fields .search { width: 200px; height: 27px; margin-left: 4px; padding: 0 7px; gap: 6px; border-color: #605e5c; }
.fields .search input { font-size: 13px; }
.tree { position: relative; margin-top: 6px; padding-top: 10px; border-top: 1px solid #e1dfdd; font-size: 12px; }
.tree svg { width: 12px; height: 12px; fill: none; stroke: #605e5c; }
.tree .ico { width: 16px; height: 16px; stroke: #252423; overflow: visible; }
.node, .leaf { display: flex; align-items: center; height: 24px; white-space: nowrap; }
.latin { font-size: 11px; }
.node { padding-left: 7px; gap: 2px; }
.node .ico { margin-right: 2px; }
.leaf { padding-left: 22px; }
.leaf b { width: 12px; margin-right: 4px; }
.leaf .ico { margin: 0 4px 0 6px; }
.leaf input { appearance: none; flex: none; width: 12px; height: 12px; margin: 0; border: 1px solid #8a8886; border-radius: 2px; }
.leaf input:checked { border-color: #f2c811; background: #f2c811; }
.leaf input:checked::before { content: ""; display: block; width: 7px; height: 4px; margin: 2px 1px; border: solid #605e5c; border-width: 0 0 1px 1px; transform: rotate(-45deg); }
.used circle { fill: #f2c811; stroke: none; }
.thumb { position: absolute; right: 0; top: 9px; width: 3px; height: 517px; background: #c8c6c4; }

/* Bottom bars */
.status { flex: none; height: 22px; }
.taskbar { flex: none; display: flex; height: 37px; border-top: 1px solid #605e5c; background: linear-gradient(90deg, #20352c, #1b342b 20%, #22372e 45%, #20382e); color: #fff; }
.taskbar button { display: flex; align-items: center; justify-content: center; width: 49px; padding-top: 4px; }
.taskbar .task-view { width: 51px; margin-left: 9px; }
.taskbar button svg { width: 24px; height: 24px; }
.taskbar .running { background: #17604f; }
.yi { fill: #fff; font-size: 9px; font-weight: 600; }
.tee { fill: #333; font: 700 18px "Liberation Serif", serif; }
.enn { fill: #fff; font-size: 11px; font-weight: 700; }
.tray { display: flex; align-items: center; gap: 10px; margin-left: auto; padding-top: 3px; }
.tray svg { width: 18px; height: 18px; }
.clock { font-size: 11px; line-height: 18px; text-align: center; }
```
